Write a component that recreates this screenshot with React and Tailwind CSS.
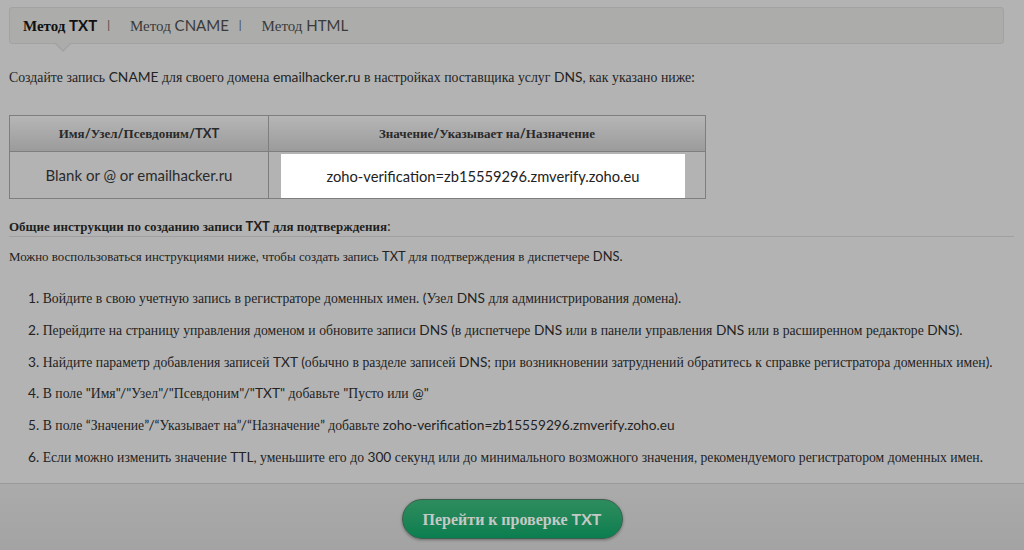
import React from "react";

function isCyr(ch) {
  const c = ch.charCodeAt(0);
  return c >= 0x0400 && c <= 0x04ff;
}

function splitRuns(text) {
  const runs = [];
  let cur = "";
  let curCyr = null;
  for (const ch of text) {
    const cy = isCyr(ch);
    if (curCyr === null || cy === curCyr) {
      cur += ch;
      curCyr = cy;
    } else {
      runs.push([cur, curCyr]);
      cur = ch;
      curCyr = cy;
    }
  }
  if (cur) runs.push([cur, curCyr]);
  return runs;
}

function M({ text }) {
  return (
    <span>
      {splitRuns(text).map(([p, cy], i) =>
        cy ? (
          <span key={i} className="[font-family:'Liberation_Serif',serif]">
            {p}
          </span>
        ) : (
          <span key={i}>{p}</span>
        )
      )}
    </span>
  );
}

const items = [
  "1. Войдите в свою учетную запись в регистраторе доменных имен. (Узел DNS для администрирования домена).",
  "2. Перейдите на страницу управления доменом и обновите записи DNS (в диспетчере DNS или в панели управления DNS или в расширенном редакторе DNS).",
  "3. Найдите параметр добавления записей TXT (обычно в разделе записей DNS; при возникновении затруднений обратитесь к справке регистратора доменных имен).",
  '4. В поле "Имя"/"Узел"/"Псевдоним"/"TXT" добавьте "Пусто или @"',
  "5. В поле “Значение”/“Указывает на”/“Назначение” добавьте zoho-verification=zb15559296.zmverify.zoho.eu",
  "6. Если можно изменить значение TTL, уменьшите его до 300 секунд или до минимального возможного значения, рекомендуемого регистратором доменных имен.",
];

export default function App() {
  return (
    <div className="h-[550px] w-[1024px] overflow-hidden bg-[#b3b3b3] text-[#232323] [font-family:Lato,sans-serif] flex flex-col">
      <div className="flex-1 min-h-0 overflow-hidden pl-[9px] pr-[10px] pt-[7px]">
        {/* Tabs */}
        <div className="relative mr-[10px] h-[37px] rounded-[3px] border border-[#a2a2a2] bg-[#acacaa] flex items-center pl-[13px] text-[15px]">
          <span className="font-bold text-[#111]">
            <M text="Метод TXT" />
          </span>
          <span className="mx-[10px] text-[11px] text-[#444]">|</span>
          <span className="ml-[10px] text-[#3a3a3a]">
            <M text="Метод CNAME" />
          </span>
          <span className="mx-[10px] text-[11px] text-[#444]">|</span>
          <span className="ml-[10px] text-[#3a3a3a]">
            <M text="Метод HTML" />
          </span>
          <div className="absolute left-[44px] top-full h-0 w-0 border-x-[9px] border-t-[9px] border-x-transparent border-t-[#a2a2a2]" />
          <div className="absolute left-[45px] top-full -mt-px h-0 w-0 border-x-[8px] border-t-[8px] border-x-transparent border-t-[#acacaa]" />
        </div>

        <p className="mt-[24px] text-[13.8px] leading-[18px] whitespace-nowrap">
          <M text="Создайте запись CNAME для своего домена emailhacker.ru в настройках поставщика услуг DNS, как указано ниже:" />
        </p>

        {/* Table */}
        <div className="mt-[28px] w-[697px] border border-[#7e7e7e]">
          <div className="flex h-[36px] border-b border-[#7e7e7e] bg-gradient-to-b from-[#b6b6b6] to-[#9b9b9b] text-[13px] font-bold text-[#2a2a2a]">
            <div className="w-[259px] border-r border-[#7e7e7e] flex items-center justify-center">
              <M text="Имя/Узел/Псевдоним/TXT" />
            </div>
            <div className="flex-1 flex items-center justify-center">
              <M text="Значение/Указывает на/Назначение" />
            </div>
          </div>
          <div className="flex h-[46px] text-[15px]">
            <div className="w-[259px] border-r border-[#7e7e7e] flex items-center justify-center text-[#2a2a2a]">
              <span>Blank or @ or emailhacker.ru</span>
            </div>
            <div className="flex-1 pl-[12px] pr-[20px] pt-[2px]">
              <div className="h-[44px] bg-white flex items-center justify-center text-[14.7px] text-[#222]">
                <span>zoho-verification=zb15559296.zmverify.zoho.eu</span>
              </div>
            </div>
          </div>
        </div>

        <div className="mt-[19px] border-b border-[#a0a0a0] pb-[1px] text-[13px] font-bold leading-[16px] text-[#1e1e1e]">
          <M text="Общие инструкции по созданию записи TXT для подтверждения" />
          <span className="font-normal">:</span>
        </div>
        <p className="mt-[11px] text-[12.9px] leading-[16px] text-[#222] whitespace-nowrap">
          <M text="Можно воспользоваться инструкциями ниже, чтобы создать запись TXT для подтверждения в диспетчере DNS." />
        </p>

        <ol className="mt-[24px] pl-[19px] flex flex-col gap-[13.8px] text-[13.7px] leading-[18px] text-[#232323]">
          {items.map((t) => (
            <li key={t} className="h-[18px] whitespace-nowrap">
              <M text={t} />
            </li>
          ))}
        </ol>
      </div>

      {/* Footer */}
      <div className="h-[67px] shrink-0 border-t border-[#9a9a9a] bg-gradient-to-b from-[#ababab] to-[#a3a3a3] flex items-start justify-center pt-[15px]">
        <button className="h-[40px] w-[221px] rounded-full border border-[#3d5e4c] bg-gradient-to-b from-[#2d8c5d] to-[#087e50] shadow-[0_1px_3px_rgba(0,0,0,0.35)] text-[16px] font-bold text-[#c4c9c6]">
          <M text="Перейти к проверке TXT" />
        </button>
      </div>
    </div>
  );
}
